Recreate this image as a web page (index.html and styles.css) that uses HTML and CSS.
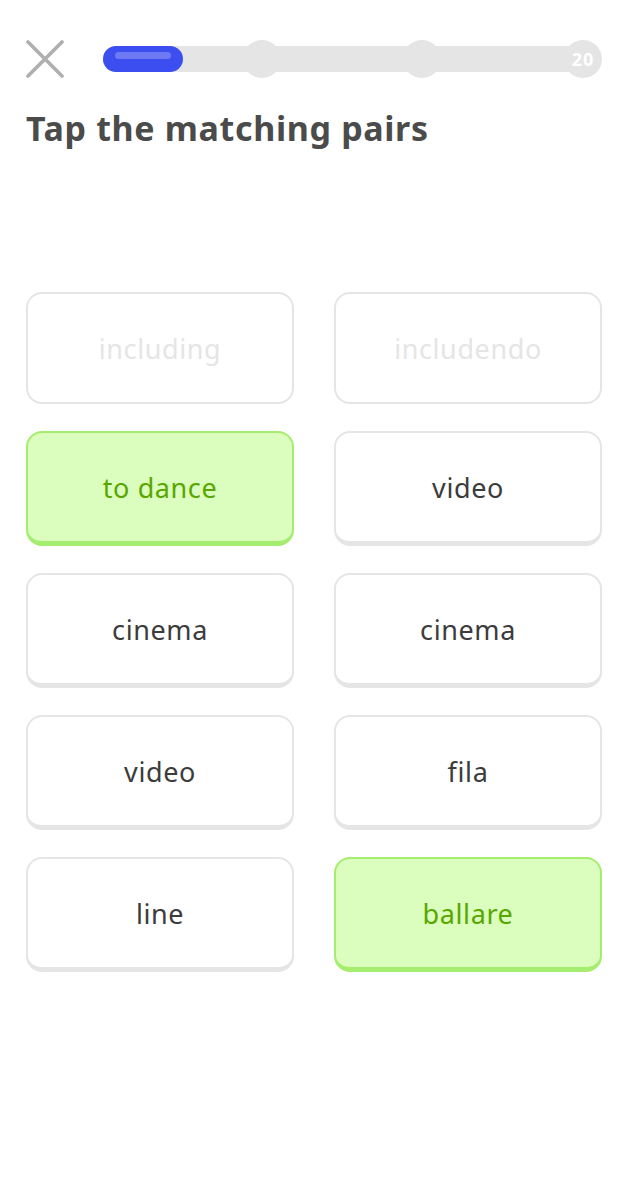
FILE: index.html
```html
<!DOCTYPE html>
<html>
<head>
<meta charset="utf-8">
<link rel="stylesheet" href="styles.css">
</head>
<body>
<div class="screen">
  <header class="topbar">
    <button class="close" aria-label="Close">
      <svg width="38" height="38" viewBox="0 0 38 38"><path d="M2 2 L36 36 M36 2 L2 36" stroke="#afafaf" stroke-width="3.6" stroke-linecap="round"/></svg>
    </button>
    <div class="progress">
      <div class="track">
        <div class="fill"><span class="shine"></span></div>
      </div>
      <span class="dot dot1"></span>
      <span class="dot dot2"></span>
      <span class="dot dot3">20</span>
    </div>
  </header>
  <h1 class="title">Tap the matching pairs</h1>
  <main class="pairs">
    <div class="card done"><span>including</span></div>
    <div class="card done"><span>includendo</span></div>
    <div class="card selected"><span>to dance</span></div>
    <div class="card"><span>video</span></div>
    <div class="card"><span>cinema</span></div>
    <div class="card"><span>cinema</span></div>
    <div class="card"><span>video</span></div>
    <div class="card"><span>fila</span></div>
    <div class="card"><span>line</span></div>
    <div class="card selected"><span>ballare</span></div>
  </main>
</div>
</body>
</html>
```
FILE: styles.css
```css
html, body {
  margin: 0;
  padding: 0;
  background: #ffffff;
}
.screen {
  width: 628px;
  font-family: "Noto Sans", "DejaVu Sans", sans-serif;
  color: #4b4b4b;
}
.topbar {
  display: flex;
  align-items: center;
  padding: 40px 0 0 26px;
  height: 38px;
}
.close {
  border: 0;
  background: none;
  padding: 0;
  width: 38px;
  height: 38px;
  display: flex;
}
.progress {
  position: relative;
  margin-left: 39px;
  width: 499px;
  height: 38px;
  display: flex;
  align-items: center;
}
.track {
  width: 490px;
  height: 26px;
  border-radius: 13px;
  background: #e5e5e5;
  display: flex;
}
.fill {
  width: 80px;
  height: 26px;
  border-radius: 13px;
  background: #3c4ef0;
  display: flex;
  justify-content: center;
  padding-top: 6px;
  box-sizing: border-box;
}
.shine {
  width: 56px;
  height: 7px;
  border-radius: 4px;
  background: rgba(255, 255, 255, 0.25);
}
.dot {
  position: absolute;
  top: 0;
  width: 38px;
  height: 38px;
  border-radius: 50%;
  background: #e5e5e5;
  color: #ffffff;
  font-weight: 700;
  font-size: 18px;
  display: flex;
  align-items: center;
  justify-content: center;
  letter-spacing: 1px;
}
.dot1 { left: 140px; }
.dot2 { left: 300px; }
.dot3 { left: 461px; }
.title {
  margin: 28px 0 0 26px;
  font-size: 34px;
  font-weight: 700;
  line-height: 44px;
  color: #4b4b4b;
  letter-spacing: 0.65px;
}
.pairs {
  display: grid;
  grid-template-columns: 268px 268px;
  grid-auto-rows: 115px;
  column-gap: 40px;
  row-gap: 27px;
  padding: 0 0 0 26px;
  margin-top: 139px;
}
.card {
  box-sizing: border-box;
  border: 2px solid #e5e5e5;
  border-bottom-width: 5px;
  border-radius: 16px;
  background: #ffffff;
  display: flex;
  align-items: center;
  justify-content: center;
  font-size: 27px;
  letter-spacing: 0.6px;
  color: #3c3c3c;
}
.card.done {
  margin-top: 3px;
  border-bottom-width: 2px;
  color: #e5e5e5;
}
.card.selected {
  background: #dbfdbd;
  border-color: #a5ed6e;
  color: #58a700;
}
```
